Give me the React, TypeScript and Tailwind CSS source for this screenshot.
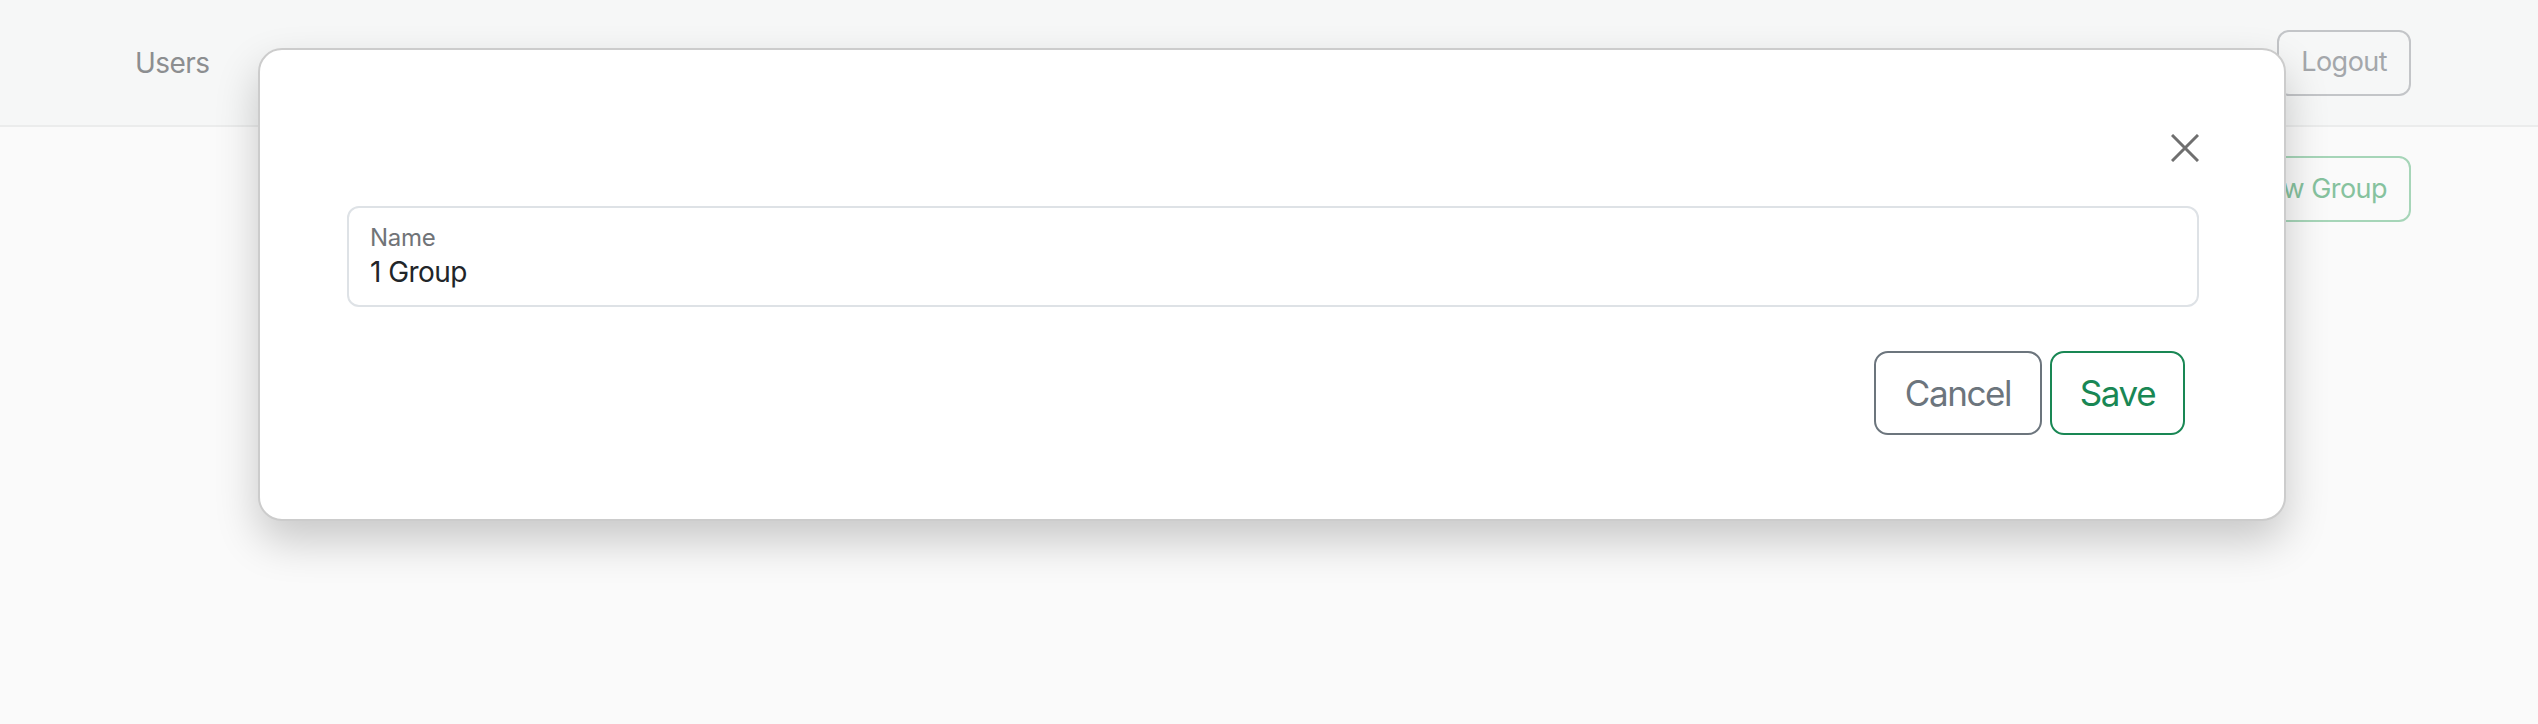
export default function App() {
  return (
    <div className="relative min-h-[724px] bg-[#fafafa] font-['Inter',sans-serif]">
      {/* page underneath */}
      <header className="flex h-[127px] items-center justify-between border-b-2 border-[#ebecec] bg-[#f6f7f7] pl-[135px] pr-[127px]">
        <nav className="flex items-center">
          <a className="text-[28px] tracking-[-0.02em] text-[#8c8e90]">Users</a>
        </nav>
        <button className="h-[66px] rounded-[12px] border-2 border-[#c3c5c8] px-[22px] text-[27px] tracking-[-0.02em] text-[#a4a7ab]">
          Logout
        </button>
      </header>
      <main className="flex justify-end pr-[127px] pt-[29px]">
        <button className="h-[66px] rounded-[12px] border-2 border-[#a6d5b8] px-[22px] text-[27px] tracking-[-0.02em] text-[#86c29e]">
          New Group
        </button>
      </main>

      {/* modal */}
      <div className="absolute inset-0 pl-[258px] pt-[48px]">
        <div className="w-[2028px] rounded-[24px] border-2 border-[#cccccc] bg-white pb-[84px] pl-[87px] pr-[85px] pt-[84px] shadow-[0_20px_44px_rgba(0,0,0,0.2)]">
          <div className="flex justify-end">
            <button className="flex h-[28px] w-[28px] items-center justify-center text-[#6f6f6f]">
              <svg width="28" height="28" viewBox="0 0 28 28" fill="none" stroke="currentColor" strokeWidth="3">
                <path d="M1 1L27 27M27 1L1 27" />
              </svg>
            </button>
          </div>
          <div className="mt-[44px] h-[101px] rounded-[12px] border-2 border-[#dee2e6] px-[21px] pt-[16px]">
            <div className="text-[24px] leading-[28px] tracking-[-0.01em] text-[#717478]">Name</div>
            <div className="mt-[4px] text-[28px] leading-[32px] tracking-[-0.02em] text-[#212529]">1 Group</div>
          </div>
          <div className="mr-[14px] mt-[44px] flex justify-end gap-[8px]">
            <button className="h-[84px] w-[168px] rounded-[14px] border-2 border-[#6c757d] text-[35px] tracking-[-0.04em] text-[#6c757d]">
              Cancel
            </button>
            <button className="h-[84px] w-[135px] rounded-[14px] border-2 border-[#198754] text-[35px] tracking-[-0.04em] text-[#198754]">
              Save
            </button>
          </div>
        </div>
      </div>
    </div>
  );
}
